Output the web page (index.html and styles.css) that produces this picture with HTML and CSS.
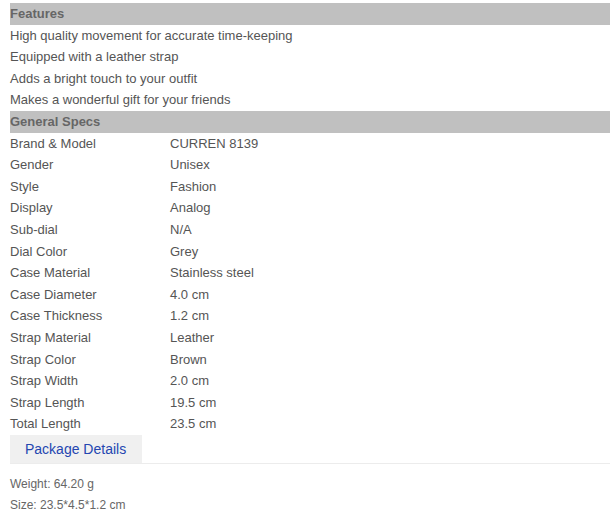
FILE: index.html
```html
<!DOCTYPE html>
<html lang="en">
<head>
    <meta charset="UTF-8">
    <title>CURREN 8139 - Specifications</title>
    <link rel="stylesheet" href="styles.css">
</head>
<body>
<div class="spec-box">
    <div class="spec-head">Features</div>
    <div class="spec-line">High quality movement for accurate time-keeping</div>
    <div class="spec-line">Equipped with a leather strap</div>
    <div class="spec-line">Adds a bright touch to your outfit</div>
    <div class="spec-line">Makes a wonderful gift for your friends</div>

    <div class="spec-head">General Specs</div>
    <div class="spec-row"><span class="spec-key">Brand &amp; Model</span><span>CURREN 8139</span></div>
    <div class="spec-row"><span class="spec-key">Gender</span><span>Unisex</span></div>
    <div class="spec-row"><span class="spec-key">Style</span><span>Fashion</span></div>
    <div class="spec-row"><span class="spec-key">Display</span><span>Analog</span></div>
    <div class="spec-row"><span class="spec-key">Sub-dial</span><span>N/A</span></div>
    <div class="spec-row"><span class="spec-key">Dial Color</span><span>Grey</span></div>
    <div class="spec-row"><span class="spec-key">Case Material</span><span>Stainless steel</span></div>
    <div class="spec-row"><span class="spec-key">Case Diameter</span><span>4.0 cm</span></div>
    <div class="spec-row"><span class="spec-key">Case Thickness</span><span>1.2 cm</span></div>
    <div class="spec-row"><span class="spec-key">Strap Material</span><span>Leather</span></div>
    <div class="spec-row"><span class="spec-key">Strap Color</span><span>Brown</span></div>
    <div class="spec-row"><span class="spec-key">Strap Width</span><span>2.0 cm</span></div>
    <div class="spec-row"><span class="spec-key">Strap Length</span><span>19.5 cm</span></div>
    <div class="spec-row"><span class="spec-key">Total Length</span><span>23.5 cm</span></div>

    <div class="tabs">
        <div class="tab active">Package Details</div>
    </div>
    <div class="package">
        <p>Weight: 64.20 g</p>
        <p>Size: 23.5*4.5*1.2 cm</p>
    </div>
</div>
</body>
</html>
```

FILE: styles.css
```css
* {
    margin: 0;
    padding: 0;
    box-sizing: border-box;
}

body {
    background: #fff;
    font-family: "Liberation Sans", Arial, sans-serif;
    font-size: 13px;
    color: #555;
}

.spec-box {
    width: 600px;
    margin: 3px 0 0 10px;
}

.spec-head {
    height: 21.6px;
    line-height: 21.6px;
    background-color: #c0c0c0;
    color: #666;
    font-weight: bold;
}

.spec-line,
.spec-row {
    height: 21.6px;
    line-height: 21.6px;
}

.spec-row {
    display: flex;
}

.spec-key {
    width: 160px;
}

.tabs {
    display: flex;
    border-bottom: 1px solid #ececec;
}

.tab {
    height: 28px;
    line-height: 28px;
    padding: 0 15px;
    width: 132px;
    font-size: 14px;
    color: #2446b0;
    background-color: #f0f0f0;
}

.package {
    padding-top: 10px;
    font-size: 12px;
    color: #666;
}

.package p {
    line-height: 21.6px;
}
```
